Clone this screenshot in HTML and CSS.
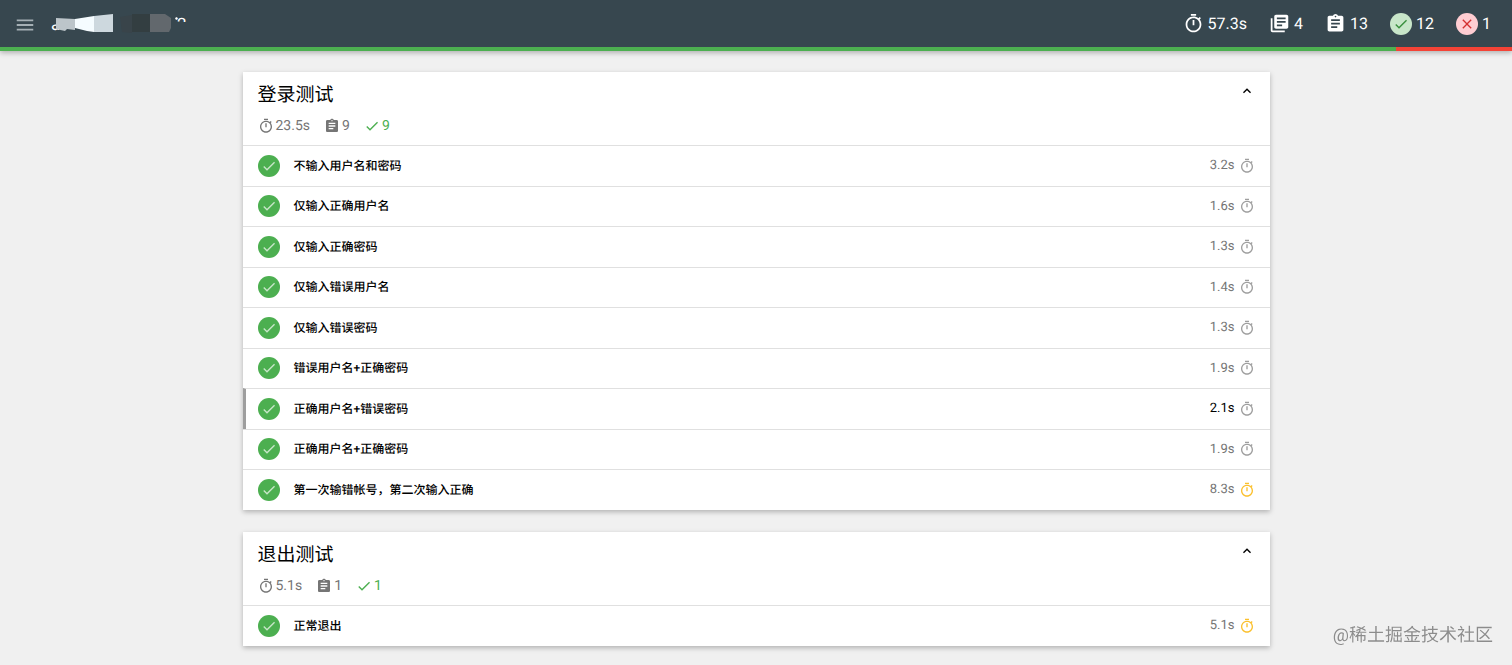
FILE: index.html
```html
<!DOCTYPE html>
<html lang="zh-CN">
<head>
    <meta charset="UTF-8">
    <meta name="viewport" content="width=device-width, initial-scale=1.0">
    <title>Test Report</title>
    <link rel="stylesheet" href="styles.css">
</head>
<body>
    <!-- Icon set -->
    <svg class="icon-defs" aria-hidden="true">
        <symbol id="menu" viewBox="0 0 24 24"><path d="M3 18h18v-2H3v2zm0-5h18v-2H3v2zm0-7v2h18V6H3z"/></symbol>
        <symbol id="timer" viewBox="0 0 24 24"><path d="M15 1H9v2h6V1zm-4 13h2V8h-2v6zm8.03-6.61l1.42-1.42c-.43-.51-.9-.99-1.41-1.41l-1.42 1.42C16.07 4.74 14.12 4 12 4c-4.97 0-9 4.03-9 9s4.02 9 9 9 9-4.03 9-9c0-2.12-.74-4.07-1.97-5.61zM12 20c-3.87 0-7-3.13-7-7s3.13-7 7-7 7 3.13 7 7-3.13 7-7 7z"/></symbol>
        <symbol id="suites" viewBox="0 0 24 24"><path d="M4 6H2v14c0 1.1.9 2 2 2h14v-2H4V6zm16-4H8c-1.1 0-2 .9-2 2v12c0 1.1.9 2 2 2h12c1.1 0 2-.9 2-2V4c0-1.1-.9-2-2-2zm-1 9H9V9h10v2zm-4 4H9v-2h6v2zm4-8H9V5h10v2z"/></symbol>
        <symbol id="tests" viewBox="0 0 24 24"><path d="M19 3h-4.18C14.4 1.84 13.3 1 12 1c-1.3 0-2.4.84-2.82 2H5c-1.1 0-2 .9-2 2v14c0 1.1.9 2 2 2h14c1.1 0 2-.9 2-2V5c0-1.1-.9-2-2-2zm-7 0c.55 0 1 .45 1 1s-.45 1-1 1-1-.45-1-1 .45-1 1-1zm2 14H7v-2h7v2zm3-4H7v-2h10v2zm0-4H7V7h10v2z"/></symbol>
        <symbol id="check" viewBox="0 0 24 24"><path d="M9 16.17L4.83 12l-1.42 1.41L9 19 21 7l-1.41-1.41z"/></symbol>
        <symbol id="close" viewBox="0 0 24 24"><path d="M19 6.41L17.59 5 12 10.59 6.41 5 5 6.41 10.59 12 5 17.59 6.41 19 12 13.41 17.59 19 19 17.59 13.41 12z"/></symbol>
        <symbol id="up" viewBox="0 0 24 24"><path d="M7.41 15.41L12 10.83l4.59 4.58L18 14l-6-6-6 6z"/></symbol>
    </svg>

    <header class="navbar">
        <div class="navbar-main">
            <button type="button" class="menu-btn" aria-label="Menu"><svg class="icon"><use href="#menu"/></svg></button>
            <svg class="report-title" viewBox="0 0 150 24">
                <text class="title-text" x="1" y="17">a</text>
                <text class="title-text" x="127" y="17">2</text>
                <path fill="#37474f" d="M0 0h7v11H0zM122 9h20v15h-20z"/>
                <path fill="#fff" d="M126 4l2 1-1 2-2-1z"/>
                <path fill="#bcc5ca" d="M6 5l19 1v11l-8-1-2 2-9-2z"/>
                <path fill="#f5fcff" d="M25 6l19-3v16l-7-1-12-3z"/>
                <path fill="#cdd8de" d="M44 3l19-2v18H44z"/>
                <path fill="#39444a" d="M70 4l12-2v18l-10-1z"/>
                <path fill="#333e41" d="M82 1h18v18H82z"/>
                <path fill="#62686d" d="M100 1h15l6 4v10l-2 4h-19z"/>
            </svg>
            <ul class="summary">
                <li><svg class="icon"><use href="#timer"/></svg>57.3s</li>
                <li><svg class="icon"><use href="#suites"/></svg>4</li>
                <li><svg class="icon"><use href="#tests"/></svg>13</li>
                <li><span class="circle circle-pass"><svg class="icon"><use href="#check"/></svg></span>12</li>
                <li><span class="circle circle-fail"><svg class="icon"><use href="#close"/></svg></span>1</li>
            </ul>
        </div>
        <div class="progress"><span class="progress-pass" style="width: 92.3%"></span></div>
    </header>

    <main class="container">
        <section class="suite">
            <header class="suite-header">
                <div>
                    <h2>登录测试</h2>
                    <ul class="suite-summary">
                        <li><svg class="icon"><use href="#timer"/></svg>23.5s</li>
                        <li><svg class="icon"><use href="#tests"/></svg>9</li>
                        <li class="passed"><svg class="icon"><use href="#check"/></svg>9</li>
                    </ul>
                </div>
                <button type="button" class="toggle-btn" aria-label="Collapse"><svg class="icon"><use href="#up"/></svg></button>
            </header>
            <ul class="tests">
                <li><button type="button" class="test"><span class="circle"><svg class="icon"><use href="#check"/></svg></span><span class="test-title">不输入用户名和密码</span><span class="duration">3.2s</span><svg class="icon timer"><use href="#timer"/></svg></button></li>
                <li><button type="button" class="test"><span class="circle"><svg class="icon"><use href="#check"/></svg></span><span class="test-title">仅输入正确用户名</span><span class="duration">1.6s</span><svg class="icon timer"><use href="#timer"/></svg></button></li>
                <li><button type="button" class="test"><span class="circle"><svg class="icon"><use href="#check"/></svg></span><span class="test-title">仅输入正确密码</span><span class="duration">1.3s</span><svg class="icon timer"><use href="#timer"/></svg></button></li>
                <li><button type="button" class="test"><span class="circle"><svg class="icon"><use href="#check"/></svg></span><span class="test-title">仅输入错误用户名</span><span class="duration">1.4s</span><svg class="icon timer"><use href="#timer"/></svg></button></li>
                <li><button type="button" class="test"><span class="circle"><svg class="icon"><use href="#check"/></svg></span><span class="test-title">仅输入错误密码</span><span class="duration">1.3s</span><svg class="icon timer"><use href="#timer"/></svg></button></li>
                <li><button type="button" class="test"><span class="circle"><svg class="icon"><use href="#check"/></svg></span><span class="test-title">错误用户名+正确密码</span><span class="duration">1.9s</span><svg class="icon timer"><use href="#timer"/></svg></button></li>
                <li><button type="button" class="test active"><span class="circle"><svg class="icon"><use href="#check"/></svg></span><span class="test-title">正确用户名+错误密码</span><span class="duration">2.1s</span><svg class="icon timer"><use href="#timer"/></svg></button></li>
                <li><button type="button" class="test"><span class="circle"><svg class="icon"><use href="#check"/></svg></span><span class="test-title">正确用户名+正确密码</span><span class="duration">1.9s</span><svg class="icon timer"><use href="#timer"/></svg></button></li>
                <li><button type="button" class="test"><span class="circle"><svg class="icon"><use href="#check"/></svg></span><span class="test-title">第一次输错帐号，第二次输入正确</span><span class="duration">8.3s</span><svg class="icon timer slow"><use href="#timer"/></svg></button></li>
            </ul>
        </section>

        <section class="suite">
            <header class="suite-header">
                <div>
                    <h2>退出测试</h2>
                    <ul class="suite-summary">
                        <li><svg class="icon"><use href="#timer"/></svg>5.1s</li>
                        <li><svg class="icon"><use href="#tests"/></svg>1</li>
                        <li class="passed"><svg class="icon"><use href="#check"/></svg>1</li>
                    </ul>
                </div>
                <button type="button" class="toggle-btn" aria-label="Collapse"><svg class="icon"><use href="#up"/></svg></button>
            </header>
            <ul class="tests">
                <li><button type="button" class="test"><span class="circle"><svg class="icon"><use href="#check"/></svg></span><span class="test-title">正常退出</span><span class="duration">5.1s</span><svg class="icon timer slow"><use href="#timer"/></svg></button></li>
            </ul>
        </section>
    </main>

    <div class="watermark">@稀土掘金技术社区</div>
</body>
</html>
```
FILE: styles.css
```css
* {
    box-sizing: border-box;
}
body {
    margin: 0;
    background: #f0f0f0;
    color: #000;
    font-family: Roboto, "Noto Sans CJK SC", sans-serif;
    font-size: 13px;
    text-rendering: geometricPrecision;
}
ul {
    list-style: none;
    margin: 0;
    padding: 0;
}
button {
    background: none;
    border: none;
    padding: 0;
    color: inherit;
    font: inherit;
    text-rendering: inherit;
    cursor: pointer;
}
.icon-defs {
    display: none;
}
.icon {
    display: block;
    flex: none;
    width: 16px;
    height: 16px;
    fill: currentColor;
}

/* Navbar */
.navbar {
    background: #37474f;
    color: #fff;
    box-shadow: 0 2px 5px rgba(0,0,0,0.26);
}
.navbar-main {
    display: flex;
    align-items: center;
    height: 47px;
    padding: 0 21px 0 14px;
}
.menu-btn {
    margin-top: 3px;
    color: #a5b0b5;
}
.menu-btn .icon {
    width: 22px;
    height: 22px;
}
.report-title {
    width: 150px;
    height: 24px;
    margin-top: 3px;
    margin-left: 14px;
}
.title-text {
    fill: #fff;
    font-size: 17px;
}
.summary {
    display: flex;
    gap: 22px;
    margin-left: auto;
    font-size: 16px;
}
.summary li {
    display: flex;
    align-items: center;
    gap: 4px;
}
.summary .icon {
    width: 21px;
    height: 21px;
}
.progress {
    height: 4px;
    background: #f44336;
}
.progress-pass {
    display: block;
    height: 100%;
    background: #4caf50;
}

/* Status circles */
.circle {
    display: flex;
    flex: none;
    align-items: center;
    justify-content: center;
    width: 22px;
    height: 22px;
    border-radius: 50%;
    background: #4caf50;
    color: #c8e6c9;
}
.circle .icon {
    width: 16px;
    height: 16px;
}
.circle-pass {
    background: #c8e6c9;
    color: #388e3c;
}
.circle-fail {
    background: #ffcdd2;
    color: #d32f2f;
}

/* Suites */
.container {
    max-width: 1027px;
    margin: 21px auto;
}
.suite {
    margin-bottom: 22px;
    background: #fff;
    box-shadow: 0 2px 5px rgba(0,0,0,0.26);
}
.suite-header {
    display: flex;
    justify-content: space-between;
    align-items: flex-start;
    height: 73px;
    padding: 11px 15px;
}
.suite-header h2 {
    margin: 0;
    font-size: 19px;
    font-weight: 400;
    line-height: 24px;
}
.suite-summary {
    display: flex;
    gap: 14px;
    margin-top: 11px;
    color: #757575;
    font-size: 14px;
    line-height: 16px;
}
.suite-summary li {
    display: flex;
    gap: 2px;
}
.suite-summary .passed {
    color: #4caf50;
}
.test {
    display: flex;
    align-items: center;
    width: 100%;
    height: 40px;
    padding: 0 15px 1px;
    border-top: 1px solid #e0e0e0;
    text-align: left;
}
.tests li:nth-child(odd) .test {
    height: 41px;
}
.test.active {
    padding-left: 12px;
    border-left: 3px solid #9e9e9e;
}
.test-title {
    flex: 1;
    margin-left: 14px;
    padding-bottom: 1px;
    font-size: 12px;
    font-weight: 500;
}
.duration {
    margin-right: 4px;
    color: #757575;
}
.active .duration {
    color: #000;
}
.timer {
    color: #9e9e9e;
}
.timer.slow {
    color: #fbc02d;
}

.watermark {
    position: fixed;
    right: 19px;
    bottom: 16px;
    color: #8c8c8c;
    font-size: 18px;
    line-height: 26px;
    text-shadow: 0 0 1px #fff;
}
```
